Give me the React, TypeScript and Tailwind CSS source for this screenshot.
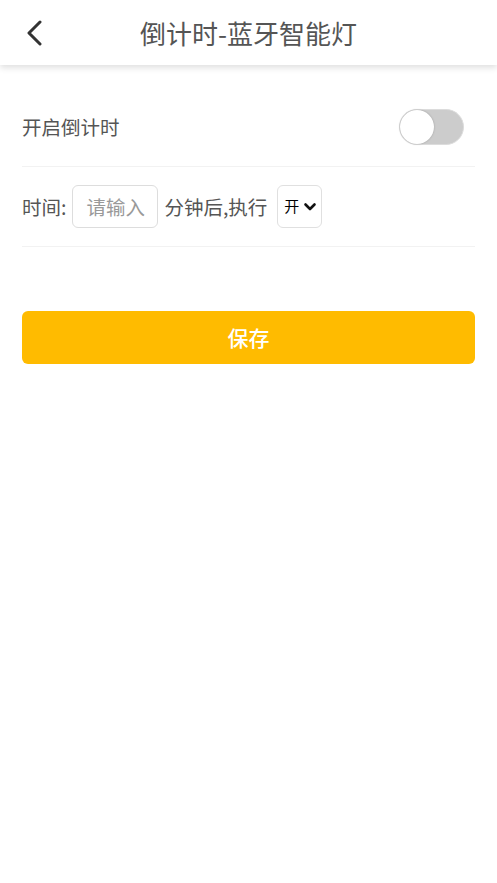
import React from "react";

export default function App() {
  const font = { fontFamily: '"Noto Sans CJK SC", "Noto Sans", sans-serif' };
  return (
    <div className="w-[497px] h-[883px] bg-white overflow-hidden" style={font}>
      <div className="relative h-[65px] flex items-center justify-center bg-white shadow-[0_3px_6px_rgba(0,0,0,0.12)]">
        <svg className="absolute left-[24px] top-[20px]" width="20" height="26" viewBox="0 0 20 26" fill="none">
          <path d="M16 2 L5 13 L16 24" stroke="#333" strokeWidth="3" strokeLinecap="round" strokeLinejoin="round" />
        </svg>
        <span className="text-[26px] text-[#555] leading-none">倒计时-蓝牙智能灯</span>
      </div>
      <div className="px-[22px] pt-[22px]">
        <div className="h-[80px] flex items-center justify-between border-b border-[#f2f2f2]">
          <span className="text-[19.5px] text-[#555]">开启倒计时</span>
          <div className="w-[65px] h-[36px] rounded-full bg-[#cccccc] border border-[#dcdcdc] mr-[11px] relative">
            <div className="absolute left-0 top-0 w-[34px] h-[34px] rounded-full bg-white shadow-[0_0_2px_rgba(0,0,0,0.25)]" />
          </div>
        </div>
        <div className="h-[80px] flex items-center border-b border-[#f2f2f2] text-[19.5px] text-[#555]">
          <span>时间:</span>
          <div className="ml-[6px] w-[86px] h-[43px] border border-[#dddddd] rounded-[6px] flex items-center pl-[13px] text-[#999] shrink-0">
            请输入
          </div>
          <span className="ml-[6px]">分钟后,执行</span>
          <div className="ml-[10px] w-[45px] h-[43px] border border-[#e0e0e0] rounded-[6px] flex items-center pl-[6px] gap-[4px] text-[15px] text-black shrink-0">
            <span>开</span>
            <svg width="14" height="10" viewBox="0 0 14 10" fill="none">
              <path d="M2.5 2.5 L7 7 L11.5 2.5" stroke="#111" strokeWidth="2.6" strokeLinecap="round" strokeLinejoin="round" />
            </svg>
          </div>
        </div>
        <button className="mt-[64px] w-full h-[53px] rounded-[6px] bg-[#ffbb00] text-white text-[21px] font-medium flex items-center justify-center">
          保存
        </button>
      </div>
    </div>
  );
}
